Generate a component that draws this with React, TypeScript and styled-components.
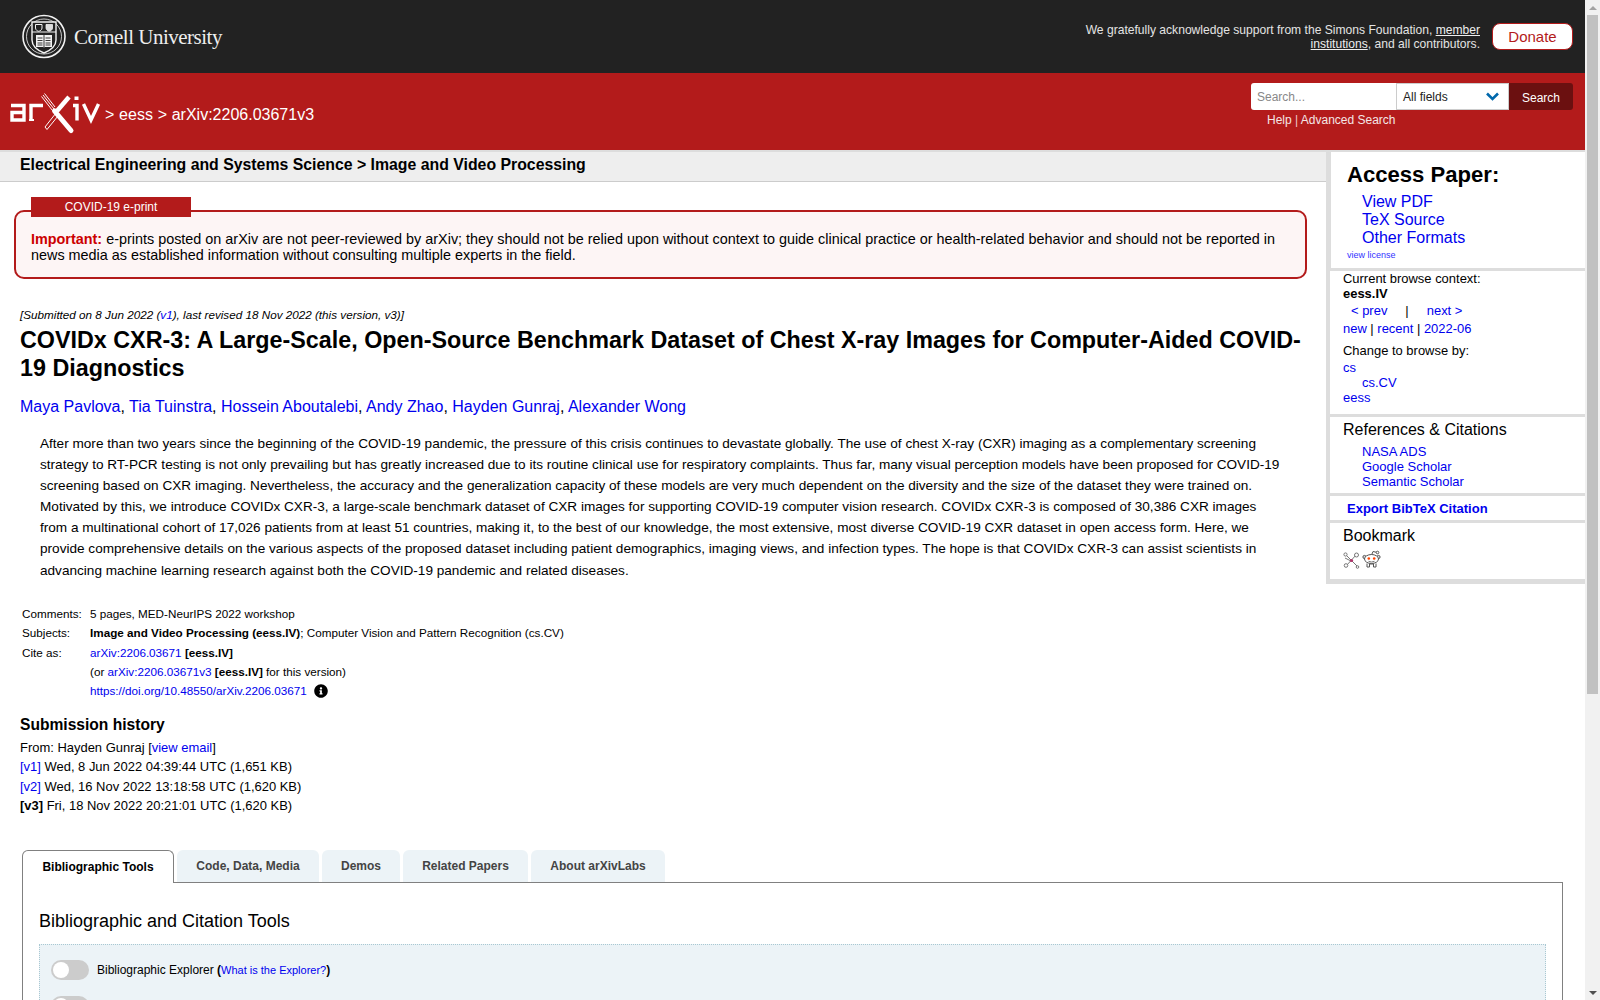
import React from 'react';
import styled, { createGlobalStyle } from 'styled-components';
import { FaInfoCircle } from 'react-icons/fa';

const Global = createGlobalStyle`
  html, body { margin: 0; padding: 0; background: #fff; overflow: hidden; }
  body { font-family: "Liberation Sans", Arial, sans-serif; color: #000; font-size: 14.4px; }
  a { color: #00e; text-decoration: none; }
`;

const Shell = styled.div`display: flex; height: 1000px; overflow: hidden;`;
const Page = styled.div`width: 1585px; flex: none; overflow: hidden;`;

const ScrollRail = styled.div`width: 15px; flex: none; background: #f1f1f1; display: flex; flex-direction: column; align-items: center;`;
const ScrollArrow = styled.div<{ $down?: boolean }>`
  height: 15px; width: 15px; flex: none; display: flex; align-items: center; justify-content: center;
  &::before {
    content: ""; width: 0; height: 0; border-left: 4px solid transparent; border-right: 4px solid transparent;
    ${p => (p.$down ? 'border-top: 4px solid #505050;' : 'border-bottom: 4px solid #a3a3a3;')}
  }
`;
const ScrollThumb = styled.div`width: 11px; height: 679px; flex: none; background: #c1c1c1;`;
const ScrollRest = styled.div`flex: 1;`;

const TopBar = styled.header`
  height: 73px; background: #222; display: flex; align-items: center; justify-content: space-between;
  padding: 0 12px 0 22px; box-sizing: border-box;
`;
const CornellLogo = styled.a`display: flex; align-items: center; gap: 8px;`;
const Wordmark = styled.span`
  font-family: "Liberation Serif", serif; font-size: 21px; letter-spacing: -0.5px; color: #eee; padding-top: 2px;
`;
const Support = styled.div`display: flex; align-items: center; gap: 12px;`;
const SupportText = styled.p`
  margin: 0; width: 410px; text-align: right; font-size: 12.1px; line-height: 14px; color: #e4e4e4;
  a { color: #eee; text-decoration: underline; }
`;
const Donate = styled.a`
  width: 81px; height: 27px; box-sizing: border-box; background: #fff; border: 1px solid #b31b1b; border-radius: 8px;
  color: #b31b1b; font-size: 15px; display: flex; align-items: center; justify-content: center;
`;

const RedBar = styled.div`
  height: 77px; background: #b31b1b; display: flex; justify-content: space-between;
  padding: 10px 12px 0 9px; box-sizing: border-box;
`;
const Crumbs = styled.div`display: flex; align-items: center; gap: 4px; height: 44px; margin-top: 8px; color: #fff; font-size: 16px;`;
const CrumbText = styled.span`padding-top: 4px; word-spacing: 0.3px;`;
const SearchArea = styled.div`width: 322px; display: flex; flex-direction: column;`;
const SearchRow = styled.div`display: flex; height: 27px;`;
const SearchInput = styled.input`
  width: 145px; height: 27px; box-sizing: border-box; border: 0; outline: 0; padding: 0 6px; border-radius: 3px 0 0 3px;
  font: 12px "Liberation Sans", Arial, sans-serif; background: #fff;
  &::placeholder { color: #888; }
`;
const FieldSelect = styled.div`
  width: 113px; box-sizing: border-box; background: #fff; border: 1px solid #ccc; display: flex; align-items: center;
  justify-content: space-between; padding: 0 9px 0 6px; font-size: 12px; color: #222;
`;
const SearchButton = styled.button`
  width: 64px; border: 0; padding: 2px 0 0; background: #6b1010; color: #fff; border-radius: 0 3px 3px 0;
  font: 12px "Liberation Sans", Arial, sans-serif;
`;
const SearchHelp = styled.div`
  margin: 3px 0 0 16px; font-size: 12px; line-height: 14px; color: #f0c9c9;
  a { color: #f4e6e6; }
`;

const Columns = styled.div`display: flex; align-items: flex-start; border-top: 2px solid #ddd;`;
const MainColumn = styled.main`width: 1326px; flex: none;`;
const Strip = styled.div`
  height: 29px; background: #eee; border-bottom: 1px solid #ccc; padding-left: 20px;
  font-weight: 700; font-size: 15.84px; line-height: 26px;
`;
const Notice = styled.section`
  position: relative; margin: 28px 19px 0 14px; height: 69px; box-sizing: border-box; border: 2px solid #b31b1b; border-radius: 10px;
  background: #fdf5f5; padding: 19px 15px 0; font-size: 14.4px; line-height: 16px;
  strong { color: #c00; }
`;
const NoticeTag = styled.div`
  position: absolute; left: 15px; top: -15px; width: 160px; height: 20px; background: #b31b1b; color: #fff;
  text-align: center; font-size: 12px; line-height: 20px;
`;
const Article = styled.article`padding: 29px 19px 0 20px;`;
const Dateline = styled.div`font-size: 11.7px; font-style: italic; line-height: 13px; color: #000;`;
const Title = styled.h1`margin: 5px 0 0; font-size: 23.32px; line-height: 28px; font-weight: 700;`;
const Authors = styled.div`margin-top: 15px; font-size: 16px; line-height: 20px;`;
const Abstract = styled.blockquote`
  margin: 16px 20px 0 20px; font-size: 13.6px; line-height: 21.1px;
`;
const Meta = styled.table`margin: 23.5px 0 0 2px; border-collapse: collapse; font-size: 11.7px; line-height: 14px;`;
const MetaRow = styled.tr``;
const MetaLabel = styled.td`width: 68px; padding: 0; height: 19.4px; vertical-align: middle;`;
const MetaValue = styled.td`padding: 0; vertical-align: middle;`;
const InfoWrap = styled.span`display: inline-block; height: 14px; margin-left: 7px; font-size: 14px; line-height: 14px; vertical-align: top;`;
const HistoryTitle = styled.h2`margin: 14px 0 3px; font-size: 15.6px; line-height: 20px; font-weight: 700;`;
const HistoryLine = styled.div`font-size: 12.96px; line-height: 19.2px;`;

const Tabs = styled.nav`display: flex; gap: 3px; margin: 35px 0 0 22px; height: 33px; position: relative; z-index: 1;`;
const Tab = styled.a<{ $active?: boolean; $w: number }>`
  width: ${p => p.$w}px; box-sizing: border-box; height: ${p => (p.$active ? 33 : 32)}px;
  display: flex; align-items: center; justify-content: center; font-size: 12px; font-weight: 700;
  border-radius: 6px 6px 0 0;
  color: ${p => (p.$active ? '#000' : '#444')};
  background: ${p => (p.$active ? '#fff' : '#ecf3f7')};
  border: ${p => (p.$active ? '1px solid #808080' : '0')};
  border-bottom: 0;
`;
const Panel = styled.section`
  margin: -1px 0 0 22px; width: 1541px; box-sizing: border-box; border: 1px solid #808080; padding: 0 16px;
  height: 500px; overflow: hidden;
`;
const PanelTitle = styled.h2`margin: 27px 0 12px; font-size: 18px; line-height: 22px; font-weight: 400;`;
const ToolBox = styled.div`
  background: #ecf3f7; border: 1px dotted #a9c8d2; padding: 15px 11px; display: flex; flex-direction: column; gap: 16px; height: 300px; box-sizing: border-box;
`;
const ToolRow = styled.div`display: flex; align-items: center; gap: 8px; font-size: 12px; a { font-size: 11px; }`;
const Toggle = styled.span`
  width: 38px; height: 20px; border-radius: 10px; background: #ccc; position: relative; flex: none;
  &::after { content: ""; position: absolute; left: 2px; top: 2px; width: 16px; height: 16px; border-radius: 50%; background: #fff; }
`;

const Sidebar = styled.aside`
  width: 259px; flex: none; box-sizing: border-box; background: #fff; border-left: 4px solid #ddd; border-bottom: 5px solid #ddd;
`;
const Block = styled.div<{ $h: number; $pad?: number }>`
  height: ${p => p.$h}px; box-sizing: border-box; border-bottom: 3px solid #ddd; padding: ${p => p.$pad ?? 0}px 0 0 13px;
  &:last-child { border-bottom: 0; }
`;
const AccessBlock = styled(Block)`border-left: 1px solid #ddd; padding-left: 16px;`;
const AccessTitle = styled.h2`margin: 0; font-size: 22.1px; line-height: 26px; font-weight: 700;`;
const AccessLinks = styled.ul`
  list-style: none; margin: 5px 0 0; padding: 0 0 0 15px; font-size: 16px; line-height: 18px;
`;
const License = styled.a`display: block; margin-top: 2px; font-size: 9px; line-height: 13px; color: #33f;`;
const SmallLine = styled.div<{ $top?: number; $indent?: number }>`
  font-size: 12.96px; line-height: 15px; margin-top: ${p => p.$top ?? 0}px; padding-left: ${p => p.$indent ?? 0}px; white-space: pre;
`;
const SideHeading = styled.h3`margin: 0; font-size: 16px; line-height: 20px; font-weight: 400;`;
const SideLinks = styled.ul`list-style: none; margin: 4px 0 0; padding: 0 0 0 19px; font-size: 13px; line-height: 15px;`;
const ExportLink = styled.a`display: block; padding: 5px 0 0 4px; font-size: 13px; line-height: 16px; font-weight: 700;`;
const BookmarkIcons = styled.div`display: flex; align-items: flex-end; gap: 2px; margin-top: 4px;`;

const ArxivLogo = () => (
  <svg width="92" height="44" viewBox="9 91 92 44" fill="none" stroke="#fff" strokeWidth="3.4">
    <path d="M11 105.5H24V120H12V112.5H24" />
    <path d="M31 120.5V105.5H43" />
    <path d="M29 120H34" strokeWidth="2" />
    <path d="M43 95 L54 109 M41.5 96.5 L52.5 110.5 M44.5 93.5 L55 107" strokeWidth="1" />
    <path d="M69 97 L57 111" strokeWidth="4.5" />
    <path d="M54.5 111 L71 130.5" strokeWidth="5" strokeLinecap="round" />
    <path d="M56 113 L45 127 L47 129.5 L58 116" strokeWidth="1" />
    <path d="M73 105.5H77V120.5" />
    <path d="M76.5 96.5V100" strokeWidth="4" />
    <path d="M83.5 104 L91 120 L98.5 104" />
  </svg>
);

const CornellSeal = () => (
  <svg width="44" height="45" viewBox="0 0 44 45" fill="none" stroke="#f2f2f2">
    <circle cx="22" cy="22.5" r="21" strokeWidth="1.6" />
    <circle cx="22" cy="22.5" r="17.5" strokeWidth="0.8" />
    <path d="M10 8H34V26C34 33 28 36.5 22 39C16 36.5 10 33 10 26Z" strokeWidth="1.4" fill="#222" />
    <path d="M10 18H34" strokeWidth="1" />
    <path d="M13.5 10.5H20V14C20 16 18 17 16.7 17.3C15.4 17 13.5 16 13.5 14Z" strokeWidth="1" />
    <path d="M24 10.5H30.5V14C30.5 16 28.5 17 27.2 17.3C26 17 24 16 24 14Z" fill="#ddd" strokeWidth="0.8" />
    <path d="M14 21H21.5L22 22L22.5 21H30V33H22.5L22 34L21.5 33H14Z" fill="#f2f2f2" stroke="none" />
    <path d="M22 21.5V33.5M15.5 24H20.5M15.5 26.5H20.5M15.5 29H20.5M15.5 31H20.5M23.5 24H28.5M23.5 26.5H28.5M23.5 29H28.5M23.5 31H28.5" stroke="#222" strokeWidth="0.9" />
  </svg>
);

const BibsonomyIcon = () => (
  <svg width="17" height="17" viewBox="0 0 17 17" fill="none" stroke="#777" strokeWidth="1">
    <path d="M2 2L15 15M14 2L3 14M8 9L2 6" />
    <circle cx="2.5" cy="2.5" r="1.6" fill="#fff" />
    <circle cx="13.5" cy="3" r="2" fill="#fff" />
    <circle cx="3" cy="13.5" r="1.8" fill="#fff" />
    <circle cx="14.5" cy="15" r="1.3" fill="#fff" />
    <circle cx="8.5" cy="8.5" r="1.6" fill="#b0356a" stroke="none" />
  </svg>
);

const RedditIcon = () => (
  <svg width="19" height="19" viewBox="0 0 19 19" fill="none" stroke="#555" strokeWidth="1">
    <path d="M9.5 5L11 1.5L14.5 2.3" />
    <circle cx="15.5" cy="2.5" r="1.3" fill="#fff" />
    <circle cx="2.5" cy="7" r="1.6" fill="#ddd" />
    <circle cx="16.5" cy="7" r="1.6" fill="#ddd" />
    <ellipse cx="9.5" cy="9" rx="7" ry="4.5" fill="#fff" />
    <circle cx="6.8" cy="8.5" r="1.3" fill="#f40" stroke="none" />
    <circle cx="12.2" cy="8.5" r="1.3" fill="#f40" stroke="none" />
    <path d="M6.5 11.3Q9.5 12.7 12.5 11.3" strokeWidth="0.8" />
    <path d="M5 13.5V17H7.5V14M14 13.5V17H11.5V14" />
    <path d="M7 14H12" />
  </svg>
);

export default function App() {
  return (
    <Shell>
      <Global />
      <Page>
        <TopBar>
          <CornellLogo>
            <CornellSeal />
            <Wordmark>Cornell University</Wordmark>
          </CornellLogo>
          <Support>
            <SupportText>
              We gratefully acknowledge support from the Simons Foundation, <a href="#m">member institutions</a>, and all contributors.
            </SupportText>
            <Donate href="#d">Donate</Donate>
          </Support>
        </TopBar>
        <RedBar>
          <Crumbs>
            <ArxivLogo />
            <CrumbText>&gt; eess &gt; arXiv:2206.03671v3</CrumbText>
          </Crumbs>
          <SearchArea>
            <SearchRow>
              <SearchInput placeholder="Search..." readOnly />
              <FieldSelect>
                All fields
                <svg width="13" height="9" viewBox="0 0 13 9" fill="none" stroke="#0068ac" strokeWidth="2.6"><path d="M1 1.5L6.5 7L12 1.5" /></svg>
              </FieldSelect>
              <SearchButton>Search</SearchButton>
            </SearchRow>
            <SearchHelp><a href="#h">Help</a> | <a href="#a">Advanced Search</a></SearchHelp>
          </SearchArea>
        </RedBar>
        <Columns>
          <MainColumn>
            <Strip>Electrical Engineering and Systems Science &gt; Image and Video Processing</Strip>
            <Notice>
              <NoticeTag>COVID-19 e-print</NoticeTag>
              <strong>Important:</strong> e-prints posted on arXiv are not peer-reviewed by arXiv; they should not be relied upon without context to guide clinical practice or health-related behavior and should not be reported in news media as established information without consulting multiple experts in the field.
            </Notice>
            <Article>
              <Dateline>[Submitted on 8 Jun 2022 (<a href="#v1">v1</a>), last revised 18 Nov 2022 (this version, v3)]</Dateline>
              <Title>COVIDx CXR-3: A Large-Scale, Open-Source Benchmark Dataset of Chest X-ray Images for Computer-Aided COVID-19 Diagnostics</Title>
              <Authors>
                <a href="#a">Maya Pavlova</a>, <a href="#a">Tia Tuinstra</a>, <a href="#a">Hossein Aboutalebi</a>, <a href="#a">Andy Zhao</a>, <a href="#a">Hayden Gunraj</a>, <a href="#a">Alexander Wong</a>
              </Authors>
              <Abstract>
                After more than two years since the beginning of the COVID-19 pandemic, the pressure of this crisis continues to devastate globally. The use of chest X-ray (CXR) imaging as a complementary screening strategy to RT-PCR testing is not only prevailing but has greatly increased due to its routine clinical use for respiratory complaints. Thus far, many visual perception models have been proposed for COVID-19 screening based on CXR imaging. Nevertheless, the accuracy and the generalization capacity of these models are very much dependent on the diversity and the size of the dataset they were trained on. Motivated by this, we introduce COVIDx CXR-3, a large-scale benchmark dataset of CXR images for supporting COVID-19 computer vision research. COVIDx CXR-3 is composed of 30,386 CXR images from a multinational cohort of 17,026 patients from at least 51 countries, making it, to the best of our knowledge, the most extensive, most diverse COVID-19 CXR dataset in open access form. Here, we provide comprehensive details on the various aspects of the proposed dataset including patient demographics, imaging views, and infection types. The hope is that COVIDx CXR-3 can assist scientists in advancing machine learning research against both the COVID-19 pandemic and related diseases.
              </Abstract>
              <Meta>
                <tbody>
                  <MetaRow><MetaLabel>Comments:</MetaLabel><MetaValue>5 pages, MED-NeurIPS 2022 workshop</MetaValue></MetaRow>
                  <MetaRow><MetaLabel>Subjects:</MetaLabel><MetaValue><b>Image and Video Processing (eess.IV)</b>; Computer Vision and Pattern Recognition (cs.CV)</MetaValue></MetaRow>
                  <MetaRow><MetaLabel>Cite as:</MetaLabel><MetaValue><a href="#c">arXiv:2206.03671</a> <b>[eess.IV]</b></MetaValue></MetaRow>
                  <MetaRow><MetaLabel /><MetaValue>(or <a href="#c">arXiv:2206.03671v3</a> <b>[eess.IV]</b> for this version)</MetaValue></MetaRow>
                  <MetaRow><MetaLabel /><MetaValue><a href="#d">https://doi.org/10.48550/arXiv.2206.03671</a><InfoWrap><FaInfoCircle /></InfoWrap></MetaValue></MetaRow>
                </tbody>
              </Meta>
              <HistoryTitle>Submission history</HistoryTitle>
              <HistoryLine>From: Hayden Gunraj [<a href="#e">view email</a>]</HistoryLine>
              <HistoryLine><a href="#1">[v1]</a> Wed, 8 Jun 2022 04:39:44 UTC (1,651 KB)</HistoryLine>
              <HistoryLine><a href="#2">[v2]</a> Wed, 16 Nov 2022 13:18:58 UTC (1,620 KB)</HistoryLine>
              <HistoryLine><b>[v3]</b> Fri, 18 Nov 2022 20:21:01 UTC (1,620 KB)</HistoryLine>
            </Article>
          </MainColumn>
          <Sidebar>
            <AccessBlock $h={119} $pad={10}>
              <AccessTitle>Access Paper:</AccessTitle>
              <AccessLinks>
                <li><a href="#p">View PDF</a></li>
                <li><a href="#t">TeX Source</a></li>
                <li><a href="#o">Other Formats</a></li>
              </AccessLinks>
              <License href="#l">view license</License>
            </AccessBlock>
            <Block $h={146}>
              <SmallLine>Current browse context:</SmallLine>
              <SmallLine><b>eess.IV</b></SmallLine>
              <SmallLine $top={2} $indent={8}><a href="#p">&lt; prev</a>{'     |     '}<a href="#n">next &gt;</a></SmallLine>
              <SmallLine $top={3}><a href="#n">new</a> | <a href="#r">recent</a> | <a href="#m">2022-06</a></SmallLine>
              <SmallLine $top={7}>Change to browse by:</SmallLine>
              <SmallLine $top={2}><a href="#cs">cs</a></SmallLine>
              <SmallLine $indent={19}><a href="#cv">cs.CV</a></SmallLine>
              <SmallLine><a href="#e">eess</a></SmallLine>
            </Block>
            <Block $h={79} $pad={3}>
              <SideHeading>References &amp; Citations</SideHeading>
              <SideLinks>
                <li><a href="#n">NASA ADS</a></li>
                <li><a href="#g">Google Scholar</a></li>
                <li><a href="#s">Semantic Scholar</a></li>
              </SideLinks>
            </Block>
            <Block $h={27}><ExportLink href="#b">Export BibTeX Citation</ExportLink></Block>
            <Block $h={56} $pad={3}>
              <SideHeading>Bookmark</SideHeading>
              <BookmarkIcons><BibsonomyIcon /><RedditIcon /></BookmarkIcons>
            </Block>
          </Sidebar>
        </Columns>
        <Tabs>
          <Tab $active $w={152} href="#1">Bibliographic Tools</Tab>
          <Tab $w={142} href="#2">Code, Data, Media</Tab>
          <Tab $w={78} href="#3">Demos</Tab>
          <Tab $w={125} href="#4">Related Papers</Tab>
          <Tab $w={134} href="#5">About arXivLabs</Tab>
        </Tabs>
        <Panel>
          <PanelTitle>Bibliographic and Citation Tools</PanelTitle>
          <ToolBox>
            <ToolRow><Toggle /><span>Bibliographic Explorer <b>(</b><a href="#x">What is the Explorer?</a><b>)</b></span></ToolRow>
            <ToolRow><Toggle /></ToolRow>
          </ToolBox>
        </Panel>
      </Page>
      <ScrollRail>
        <ScrollArrow />
        <ScrollThumb />
        <ScrollRest />
        <ScrollArrow $down />
      </ScrollRail>
    </Shell>
  );
}
